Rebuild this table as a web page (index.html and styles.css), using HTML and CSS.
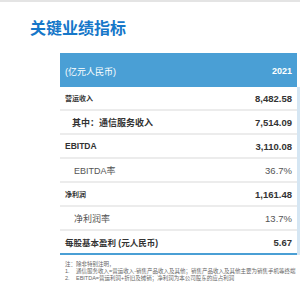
FILE: index.html
```html
<!DOCTYPE html>
<html lang="zh-CN">
<head>
<meta charset="utf-8">
<link rel="stylesheet" href="styles.css">
</head>
<body>
<div class="topbar"></div>
<h1 class="title">关键业绩指标</h1>
<div class="table">
  <div class="thead">
    <span class="th-label">(亿元人民币)</span>
    <span class="th-year">2021</span>
  </div>
  <div class="tbody">
    <div class="row"><span class="lbl b small">营运收入</span><span class="val b">8,482.58</span></div>
    <div class="row"><span class="lbl b ind1">其中：通信服务收入</span><span class="val b">7,514.09</span></div>
    <div class="row"><span class="lbl b latin">EBITDA</span><span class="val b">3,110.08</span></div>
    <div class="row"><span class="lbl ind2">EBITDA率</span><span class="val">36.7%</span></div>
    <div class="row"><span class="lbl b small">净利润</span><span class="val b">1,161.48</span></div>
    <div class="row"><span class="lbl ind2">净利润率</span><span class="val">13.7%</span></div>
    <div class="row last"><span class="lbl b eps">每股基本盈利 (元人民币)</span><span class="val b">5.67</span></div>
  </div>
  <div class="notes">
    <div class="note">注：除非特别注明，</div>
    <div class="note"><span class="num">1.</span><span class="ntext">通信服务收入=营运收入-销售产品收入及其他；销售产品收入及其他主要为销售手机等终端</span></div>
    <div class="note"><span class="num">2.</span><span class="ntext">EBITDA=营运利润+折旧及摊销；净利润为本公司股东的应占利润</span></div>
  </div>
</div>
</body>
</html>
```
FILE: styles.css
```css
html, body {
  margin: 0;
  padding: 0;
  width: 300px;
  height: 300px;
  overflow: hidden;
  background: #ffffff;
  font-family: "Liberation Sans", "Noto Sans CJK SC", sans-serif;
  color: #333333;
}
.topbar {
  height: 2px;
  background: #e4e4e4;
}
.title {
  margin: 15px 0 0 30px;
  font-family: "Noto Sans CJK SC", sans-serif;
  font-size: 16px;
  line-height: 20px;
  font-weight: 700;
  color: #1677c9;
  white-space: nowrap;
}
.table {
  margin: 16px 0 0 60px;
  width: 240px;
}
.thead {
  width: 237px;
  height: 34px;
  background: #4a9fd5;
  color: #ffffff;
  display: flex;
  align-items: center;
  justify-content: space-between;
  box-sizing: border-box;
  padding: 0 5px 0 5px;
  font-size: 9px;
}
.th-label {
  position: relative;
  top: 1px;
}
.th-year {
  font-weight: 700;
  position: relative;
  top: 1px;
}
.tbody {
  width: 237px;
  border-right: 3px solid #d5e6f3;
}
.row {
  height: 22px;
  border-bottom: 2px solid #ececec;
  display: flex;
  align-items: center;
  justify-content: space-between;
  padding: 0 5px 0 5px;
  white-space: nowrap;
}
.row.last {
  border-bottom: 2px solid #4a9fd5;
}
.lbl {
  font-size: 9px;
  color: #555555;
}
.lbl.b {
  font-weight: 700;
  color: #333333;
}
.lbl.small {
  font-size: 7px;
}
.lbl.latin {
  font-size: 8.5px;
}
.lbl.eps {
  font-size: 8.5px;
}
.ind1 {
  margin-left: 7px;
}
.ind2 {
  margin-left: 9px;
}
.val {
  font-size: 9.5px;
  color: #555555;
}
.val.b {
  font-weight: 700;
  color: #333333;
}
.notes {
  margin-top: 6px;
  padding-left: 5px;
  font-size: 5.5px;
  line-height: 7px;
  color: #666666;
  white-space: nowrap;
}
.note {
  display: flex;
}
.num {
  flex-shrink: 0;
  width: 11px;
}
.ntext {
  flex-shrink: 0;
}
```
